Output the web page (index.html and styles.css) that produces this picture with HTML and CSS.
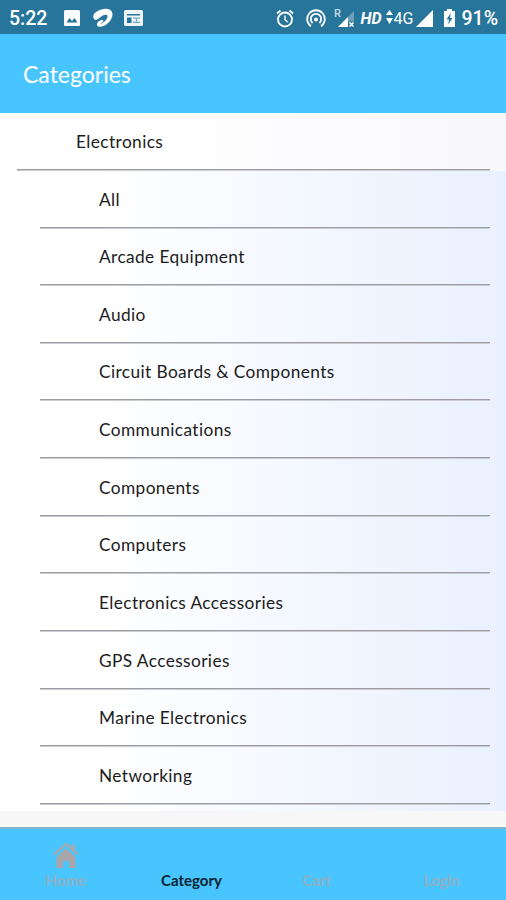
FILE: index.html
```html
<!DOCTYPE html>
<html lang="en">

<head>
    <meta charset="UTF-8">
    <meta name="viewport" content="width=device-width, initial-scale=1.0">
    <title>Categories</title>
    <link rel="stylesheet" href="styles.css">
</head>

<body>
    <div class="status-bar">
        <div class="status-left">
            <span class="time">5:22</span>
            <svg class="icon-picture" width="16" height="16" viewBox="0 0 16 16">
                <rect width="16" height="16" rx="1.5" fill="#fff"/>
                <path d="M2.5 12.5l3-4.5 2.5 3 2.5-3 3 4.5z" fill="#27759a"/>
            </svg>
            <svg class="icon-airtel" width="22" height="20" viewBox="0 0 22 20">
                <path d="M2 11C-.5 7 3.5 3 9.5 1.4C16-.3 20.500 2 20.500 6.500C20.500 12 14 18.300 8.500 18.800C4.500 19 4 16 6.500 13.500C9 11.200 12 11.500 11.200 13.500C10.600 14.800 8.800 14.500 8.500 15.500C9 16.300 15.500 12.500 15.500 8.200C15.500 6 11.500 6.500 8.800 8.800C6.800 10.500 4.500 13.500 2 11z" fill="#fff"/>
            </svg>
            <svg class="icon-news" width="19" height="16" viewBox="0 0 19 16">
                <rect width="19" height="16" rx="1.5" fill="#eef5f8"/>
                <path d="M3 4h13v1.5H3zM3 7.500h4.500v5.500H3z" fill="#27759a"/>
                <path d="M9 8.200h7M9 12.300h7M12.500 8v5" stroke="#7aa9bf" stroke-width="1.2"/>
            </svg>
        </div>
        <div class="status-right">
            <svg class="icon-alarm" width="18" height="19" viewBox="0 0 18 19" fill="none" stroke="#fff">
                <circle cx="9" cy="10.5" r="7" stroke-width="1.8"/>
                <path d="M1 4.500L4.500 1.500M17 4.500L13.500 1.500" stroke-width="1.8"/>
                <path d="M9 6.500v4.500l3 2" stroke-width="1.4"/>
            </svg>
            <svg class="icon-hotspot" width="20" height="19" viewBox="0 0 20 19" fill="none" stroke="#fff" stroke-width="1.8">
                <path d="M5 17.300A8.800 8.800 0 1 1 15 17.300"/>
                <path d="M6.600 14A5.200 5.200 0 1 1 13.400 14"/>
                <circle cx="10" cy="10.5" r="2" fill="#fff" stroke="none"/>
            </svg>
            <svg class="icon-roaming" width="21" height="20" viewBox="0 0 21 20">
                <path d="M20 3v16H4z" fill="#6f9fb7"/>
                <path d="M14 9v10H4z" fill="#fff"/>
                <path d="M14 13.500h6.500v6H14z" fill="#27759a"/>
                <path d="M15.500 14.500l4 4M19.500 14.500l-4 4" stroke="#fff" stroke-width="1.6"/>
                <text x="0" y="9" class="roaming-letter">R</text>
            </svg>
            <span class="hd">HD</span>
            <svg class="icon-data" width="7" height="14" viewBox="0 0 7 14">
                <path d="M3.500 0L7 5H0zM3.500 14L0 8h7z" fill="#fff"/>
            </svg>
            <span class="network">4G</span>
            <svg class="icon-signal" width="17" height="17" viewBox="0 0 17 17">
                <path d="M17 0v17H0z" fill="#fff"/>
            </svg>
            <svg class="icon-battery" width="11" height="18" viewBox="0 0 11 18">
                <path d="M3 0h5v2h3v16H0V2h3z" fill="#fff"/>
                <path d="M6.800 4L2.500 10.500h2.600L4.200 15.500L8.500 9H6z" fill="#27759a"/>
            </svg>
            <span class="percent">91%</span>
        </div>
    </div>

    <header class="header">
        <h1>Categories</h1>
    </header>

    <main class="content">
        <div class="category">Electronics</div>
        <ul class="subcategories">
            <li>All</li>
            <li>Arcade Equipment</li>
            <li>Audio</li>
            <li>Circuit Boards &amp; Components</li>
            <li>Communications</li>
            <li>Components</li>
            <li>Computers</li>
            <li>Electronics Accessories</li>
            <li>GPS Accessories</li>
            <li>Marine Electronics</li>
            <li>Networking</li>
        </ul>
    </main>

    <nav class="tab-bar">
        <div class="tab">
            <svg width="26" height="26" viewBox="0 0 26 26">
                <path d="M1 12.500L13 2L25 12.500" fill="none" stroke="#a3a9b0" stroke-width="2.4"/>
                <path d="M18.500 2.500H22V9l-3.500-3z" fill="#a3a9b0"/>
                <path d="M13 6.500L22.500 15V26H16v-7h-6v7H3.500V15z" fill="#a9a5a8"/>
            </svg>
            <span>Home</span>
        </div>
        <div class="tab active"><span>Category</span></div>
        <div class="tab"><span>Cart</span></div>
        <div class="tab"><span>Login</span></div>
    </nav>
</body>

</html>
```

FILE: styles.css
```css
* {
    box-sizing: border-box;
}

body {
    margin: 0;
    height: 900px;
    display: flex;
    flex-direction: column;
    overflow: hidden;
    font-family: Lato, "Open Sans", sans-serif;
    background-color: #f7f7f7;
}

.status-bar {
    height: 34px;
    display: flex;
    justify-content: space-between;
    align-items: center;
    padding: 2px 8px 0 9px;
    background-color: #27759a;
    color: #fff;
    font-family: Roboto, sans-serif;
    font-size: 19.5px;
    font-weight: 500;
}

.status-left,
.status-right {
    display: flex;
    align-items: center;
}

.icon-picture {
    margin-left: 17px;
}

.icon-airtel {
    margin-left: 12px;
}

.icon-news {
    margin-left: 10px;
}

.icon-hotspot {
    margin-left: 12px;
}

.icon-roaming {
    margin-left: 8px;
}

.roaming-letter {
    font-size: 11px;
    fill: #c5dce6;
}

.hd {
    margin-left: 6px;
    font-size: 16px;
    font-weight: 700;
    font-style: italic;
}

.icon-data {
    margin: 0 1px 2px 4px;
}

.network {
    font-size: 16px;
    font-weight: 400;
}

.icon-signal {
    margin-left: 3px;
}

.icon-battery {
    margin-left: 11px;
}

.percent {
    margin-left: 6px;
}

.header {
    height: 79px;
    display: flex;
    align-items: center;
    padding-left: 23px;
    background-color: #48c5ff;
    color: #fff;
}

.header h1 {
    margin: 0;
    font-size: 23px;
    font-weight: 400;
}

.content {
    height: 698px;
    color: #1c1c1c;
    font-size: 17.3px;
    letter-spacing: 0.4px;
    background: linear-gradient(90deg, #fff 0%, #fff 20%, #e9f0ff 100%);
}

.category {
    height: 57.6px;
    padding: 0 16px 0 17px;
    line-height: 57px;
    text-indent: 59px;
    background: linear-gradient(90deg, #fff 30%, #f8f7fc 100%);
}

.category::after,
.subcategories li::after {
    content: "";
    display: block;
    height: 2px;
    margin-top: -1px;
    background: linear-gradient(#9c9ca2 50%, #cccdd3 50%);
}

.subcategories {
    margin: 0;
    padding: 0 16px 0 40px;
    list-style: none;
}

.subcategories li {
    height: 57.64px;
    line-height: 57px;
    text-indent: 59px;
}

.tab-bar {
    height: 73px;
    margin-top: auto;
    display: grid;
    grid-template-columns: 131px 121px 129px 121px;
    border-top: 2px solid #84b5ca;
    background-color: #48c5ff;
    color: #8db0c3;
    font-size: 15px;
    box-shadow: 0 -2px #fff;
}

.tab {
    display: flex;
    flex-direction: column;
    align-items: center;
    justify-content: flex-end;
    padding-bottom: 10px;
    line-height: 20px;
    font-weight: 700;
}

.tab svg {
    margin-bottom: 2px;
}

.active {
    color: #082331;
}
```
